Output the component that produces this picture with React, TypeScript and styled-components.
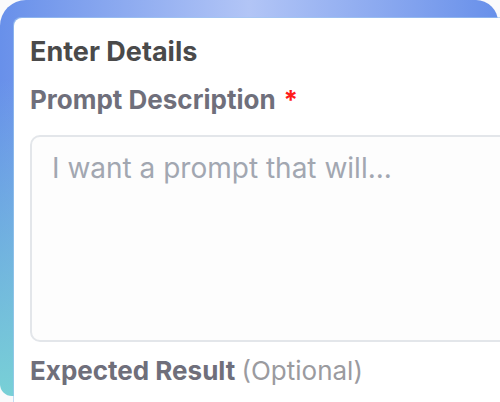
import React from 'react'
import styled, { createGlobalStyle } from 'styled-components'

const GlobalStyle = createGlobalStyle`
  html, body {
    margin: 0;
    padding: 0;
    background: #ffffff;
    font-family: Inter, "Noto Sans", sans-serif;
    overflow: hidden;
  }
`

const Page = styled.div`
  width: 500px;
  height: 402px;
  overflow: hidden;
  background: #fafafb;
`

const Frame = styled.div`
  width: 498px;
  height: 396px;
  box-sizing: border-box;
  padding: 18px 0 0 14px;
  border-radius: 26px 22px 0 12px;
  background:
    linear-gradient(to bottom, rgba(120, 208, 214, 0) 20%, rgba(120, 208, 214, 1) 100%),
    linear-gradient(to right, #6890ea 0%, #b2c5f6 50%, #6890ea 100%);
`

const Card = styled.div`
  width: 520px;
  height: 420px;
  box-sizing: border-box;
  padding: 18px 16px 0 16px;
  background: #ffffff;
  border-radius: 8px 0 0 0;
  box-shadow: -1px -1px 0 rgba(160, 200, 240, 0.6);
`

const Title = styled.h2`
  margin: 0;
  font-size: 27px;
  font-weight: 700;
  line-height: 32px;
  color: #4a4a4a;
`

const Label = styled.div<{ $gap: number }>`
  margin-top: ${(props) => props.$gap}px;
  font-size: 26px;
  font-weight: 700;
  line-height: 32px;
  color: #6f6f7b;
  white-space: nowrap;
`

const Required = styled.span`
  color: #ff1a1a;
  margin-left: 8px;
`

const Optional = styled.span`
  font-weight: 400;
  color: #9b9b9f;
`

const Area = styled.textarea`
  display: block;
  margin-top: 19px;
  width: 520px;
  height: 207px;
  box-sizing: border-box;
  padding: 14px 20px;
  border: 2px solid #e3e6ea;
  border-radius: 10px;
  background: #fdfdfd;
  font-family: Inter, "Noto Sans", sans-serif;
  font-size: 28px;
  line-height: 34px;
  color: #333;
  resize: none;
  outline: none;

  &::placeholder {
    color: #a2a7b1;
  }
`

export default function App() {
  return (
    <Page>
      <GlobalStyle />
      <Frame>
        <Card>
          <Title>Enter Details</Title>
          <Label $gap={16}>
            Prompt Description<Required>*</Required>
          </Label>
          <Area placeholder='I want a prompt that will...' />
          <Label $gap={13}>
            Expected Result <Optional>(Optional)</Optional>
          </Label>
        </Card>
      </Frame>
    </Page>
  )
}
